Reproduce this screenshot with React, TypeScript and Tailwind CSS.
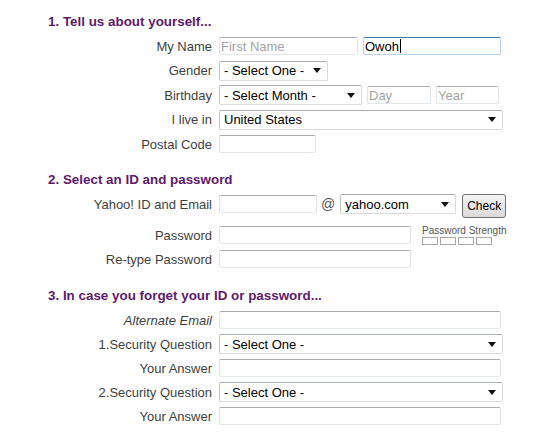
import type { ReactNode } from 'react';

const LABEL = 'w-[219px] shrink-0 pr-[7px] text-right text-[13px] leading-none text-[#3f3f3f]';

const Heading = ({ children }: { children: ReactNode }) => (
  <h2 className="flex h-[20px] items-center pl-[48px] text-[13.4px] font-bold leading-none text-[#5e1a6c]">{children}</h2>
);

const Row = ({ label, italic, children }: { label: string; italic?: boolean; children: ReactNode }) => (
  <div className="flex h-[24px] items-center">
    <span className={`${LABEL} ${italic ? 'italic' : ''}`}>{label}</span>
    <div className="flex items-center">{children}</div>
  </div>
);

const TextBox = ({ width, placeholder, className = '' }: { width: string; placeholder?: string; className?: string }) => (
  <div
    className={`flex h-[18px] items-center rounded-[2px] border border-[#e2e3ea] border-t-[#abadb3] border-b-[#e3e9ef] bg-white pl-[1px] text-[13px] leading-none text-[#a3a3a3] ${width} ${className}`}
  >
    {placeholder}
  </div>
);

const SelectBox = ({ width, value, className = '' }: { width: string; value: string; className?: string }) => (
  <div
    className={`flex h-[20px] items-center justify-between rounded-[2px] border border-[#dadada] border-t-[#abadb3] border-l-[#c5c5c5] bg-white pl-[4px] pr-[6px] text-[13px] leading-none text-black ${width} ${className}`}
  >
    <span>{value}</span>
    <svg width="8" height="5" viewBox="0 0 8 5" className="shrink-0">
      <path d="M0 0h8L4 5z" fill="#111" />
    </svg>
  </div>
);

export default function App() {
  return (
    <div className="min-h-[433px] w-[550px] bg-white pt-[12px] font-['Liberation_Sans',Arial,sans-serif]">
      <section>
        <Heading>1. Tell us about yourself...</Heading>
        <div className="mt-[2px] flex flex-col [&>div]:h-[24.5px]">
          <Row label="My Name">
            <TextBox width="w-[139px]" placeholder="First Name" />
            <div className="ml-[5px] flex h-[18px] w-[138px] items-center rounded-[2px] border border-[#b5cfe7] border-t-[#3d7bad] border-b-[#b7d5ea] bg-white pl-[1px] text-[13px] leading-none text-black">
              Owoh
              <span className="ml-[1px] inline-block h-[14px] w-px bg-black" />
            </div>
          </Row>
          <Row label="Gender">
            <SelectBox width="w-[109px]" value="- Select One -" />
          </Row>
          <Row label="Birthday">
            <SelectBox width="w-[143px]" value="- Select Month -" />
            <TextBox width="w-[64px]" placeholder="Day" className="ml-[5px]" />
            <TextBox width="w-[63px]" placeholder="Year" className="ml-[5px]" />
          </Row>
          <Row label="I live in">
            <SelectBox width="w-[284px]" value="United States" />
          </Row>
          <Row label="Postal Code">
            <TextBox width="w-[97px]" />
          </Row>
        </div>
      </section>

      <section className="mt-[13.5px]">
        <Heading>2. Select an ID and password</Heading>
        <div className="mt-[2px] flex flex-col">
          <Row label="Yahoo! ID and Email">
            <TextBox width="w-[98px]" />
            <span className="ml-[4px] mr-[5px] text-[14px] leading-none text-[#555]">@</span>
            <SelectBox width="w-[116px]" value="yahoo.com" />
            <button className="ml-[6px] mt-[4px] h-[24px] w-[44px] rounded-[3px] border border-[#707070] bg-gradient-to-b from-[#f4f4f4] to-[#dadada] text-[12px] leading-none text-black">
              Check
            </button>
          </Row>
          <div className="mt-[7px]" />
          <Row label="Password">
            <TextBox width="w-[192px]" />
            <div className="ml-[11px] flex flex-col">
              <span className="text-[10px] leading-[10px] text-[#555]">Password Strength</span>
              <div className="mt-[1px] flex gap-[2px]">
                {[0, 1, 2, 3].map((i) => (
                  <span key={i} className="h-[8px] w-[16px] border border-[#a8a8a8] bg-white" />
                ))}
              </div>
            </div>
          </Row>
          <Row label="Re-type Password">
            <TextBox width="w-[192px]" />
          </Row>
        </div>
      </section>

      <section className="mt-[15px]">
        <Heading>3. In case you forget your ID or password...</Heading>
        <div className="mt-[2px] flex flex-col">
          <Row label="Alternate Email" italic>
            <TextBox width="w-[282px]" />
          </Row>
          <Row label="1.Security Question">
            <SelectBox width="w-[284px]" value="- Select One -" />
          </Row>
          <Row label="Your Answer">
            <TextBox width="w-[282px]" />
          </Row>
          <Row label="2.Security Question">
            <SelectBox width="w-[284px]" value="- Select One -" />
          </Row>
          <Row label="Your Answer">
            <TextBox width="w-[282px]" />
          </Row>
        </div>
      </section>
    </div>
  );
}
